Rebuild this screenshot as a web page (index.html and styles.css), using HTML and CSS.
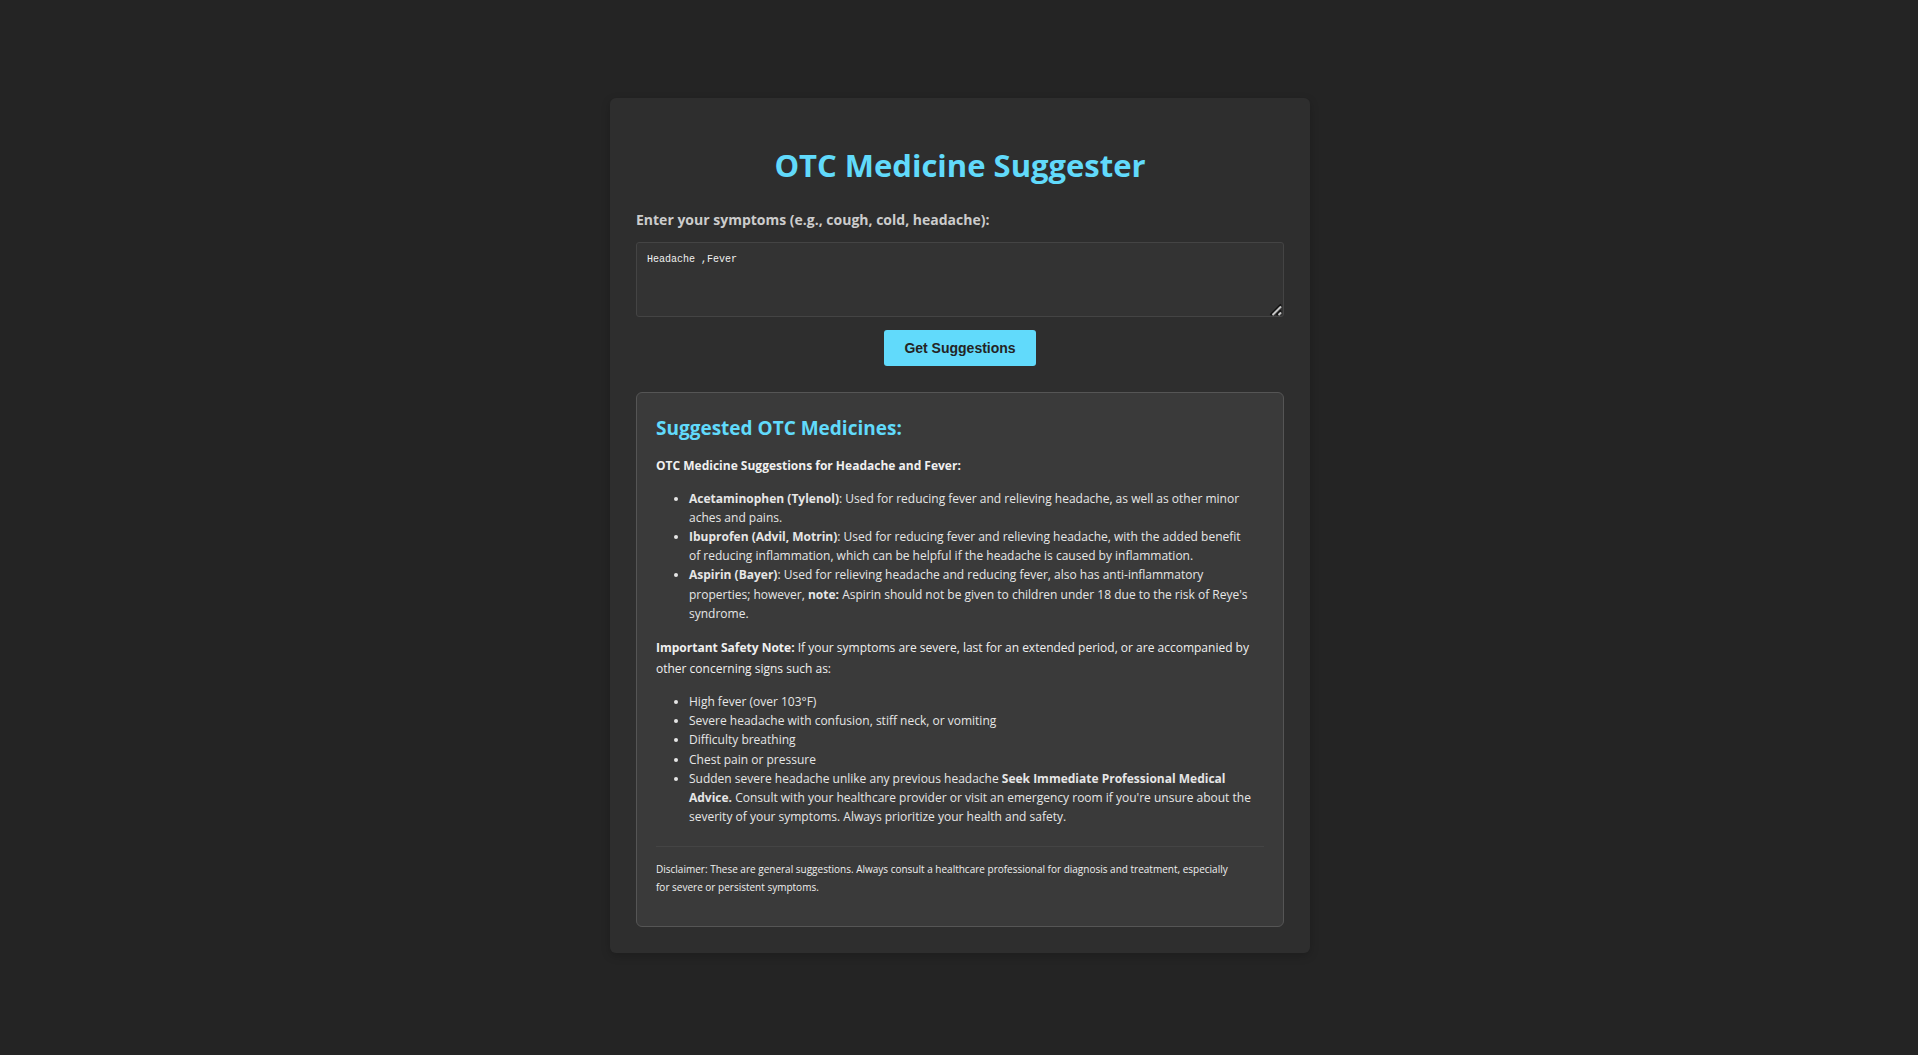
FILE: index.html
```html
<!DOCTYPE html>
<html lang="en">
<head>
<meta charset="utf-8">
<meta name="viewport" content="width=device-width, initial-scale=1">
<title>OTC Medicine Suggester</title>
<link rel="stylesheet" href="styles.css">
</head>
<body>
<main class="card">
  <h1 class="title">OTC Medicine Suggester</h1>
  <form class="form">
    <label class="form-label" for="symptoms">Enter your symptoms (e.g., cough, cold, headache):</label>
    <textarea class="form-input" id="symptoms" name="symptoms">Headache ,Fever</textarea>
    <button class="form-button" type="button">Get Suggestions</button>
  </form>
  <section class="results">
    <h2 class="results-title">Suggested OTC Medicines:</h2>
    <p class="text"><strong>OTC Medicine Suggestions for Headache and Fever:</strong></p>
    <ul class="list">
      <li><strong>Acetaminophen (Tylenol)</strong>: Used for reducing fever and relieving headache, as well as other minor aches and pains.</li>
      <li><strong>Ibuprofen (Advil, Motrin)</strong>: Used for reducing fever and relieving headache, with the added benefit of&nbsp;reducing inflammation, which can be helpful if the headache is caused by inflammation.</li>
      <li><strong>Aspirin (Bayer)</strong>: Used for relieving headache and reducing fever, also has anti-inflammatory properties; however, <strong>note:</strong> Aspirin should not be given to children under 18 due to the risk of Reye's syndrome.</li>
    </ul>
    <p class="text"><strong>Important Safety Note:</strong> If your symptoms are severe, last for an extended period, or are accompanied by other concerning signs such as:</p>
    <ul class="list">
      <li>High fever (over 103°F)</li>
      <li>Severe headache with confusion, stiff neck, or vomiting</li>
      <li>Difficulty breathing</li>
      <li>Chest pain or pressure</li>
      <li>Sudden severe headache unlike any previous headache <strong>Seek Immediate Professional Medical Advice.</strong> Consult with your healthcare provider or visit an emergency room if you're unsure about the severity of your symptoms. Always prioritize your health and safety.</li>
    </ul>
    <p class="disclaimer">Disclaimer: These are general suggestions. Always consult a healthcare professional for diagnosis and treatment, especially for&nbsp;severe or persistent symptoms.</p>
  </section>
</main>
</body>
</html>
```
FILE: styles.css
```css
* {
  box-sizing: border-box;
}

body {
  display: flex;
  align-items: center;
  justify-content: center;
  min-height: 100vh;
  margin: 0;
  padding: 0 0 4px 2px;
  background: #242424;
  color: #f0f0f0;
  font-family: "Segoe UI", "Open Sans", "Noto Sans", sans-serif;
  font-size: 12px;
  line-height: 21px;
}

.card {
  width: 100%;
  max-width: 700px;
  padding: 26px;
  border-radius: 6px;
  background: #2e2e2e;
  box-shadow: 0 3px 10px rgba(0, 0, 0, 0.2);
}

.title {
  margin: 19px 0 22px;
  color: #61dafb;
  font-size: 31px;
  line-height: 44px;
  text-align: center;
}

.form {
  display: flex;
  flex-direction: column;
  align-items: center;
}

.form-label {
  align-self: stretch;
  margin-bottom: 12px;
  color: #ccc;
  font-size: 14px;
  font-weight: 700;
}

.form-input {
  width: 100%;
  height: 75px;
  margin-bottom: 13px;
  padding: 10px;
  border: 1px solid #444;
  border-radius: 3px;
  background: #333;
  color: #f0f0f0;
  font-family: Consolas, "Liberation Mono", monospace;
  font-size: 10px;
  line-height: 13px;
  resize: vertical;
}

/* Light diagonal grip lines with a dark edge */
.form-input::-webkit-resizer {
  background: url("data:image/svg+xml,%3Csvg xmlns='http://www.w3.org/2000/svg' width='15' height='15' fill='none' stroke-width='2'%3E%3Cpath d='M2.5 14 13 3.5M8.5 14 13 9.5' stroke='%23111'/%3E%3Cpath d='M4.5 14 13 5.5M10.5 14 13 11.5' stroke='%23c4c4c4'/%3E%3C/svg%3E") right bottom no-repeat;
}

.form-button {
  padding: 0 20px;
  border: 0;
  border-radius: 3px;
  background: #61dafb;
  color: #242424;
  font-family: Arial, "Liberation Sans", sans-serif;
  font-size: 14px;
  font-weight: 700;
  line-height: 36px;
}

.results {
  margin-top: 26px;
  padding: 19px;
  border: 1px solid #555;
  border-radius: 6px;
  background: #3a3a3a;
}

.results-title {
  margin: 0 0 11px;
  color: #61dafb;
  font-size: 19px;
  line-height: 32px;
}

.text {
  margin: 0 0 13px;
}

.list {
  margin: 0 0 14px;
  padding-left: 33px;
  color: #e6e6e6;
  line-height: 1.6;
}

.disclaimer {
  margin: 20px 0 11px;
  padding-top: 13px;
  border-top: 1px solid #444;
  font-size: 10px;
  line-height: 18px;
}
```
